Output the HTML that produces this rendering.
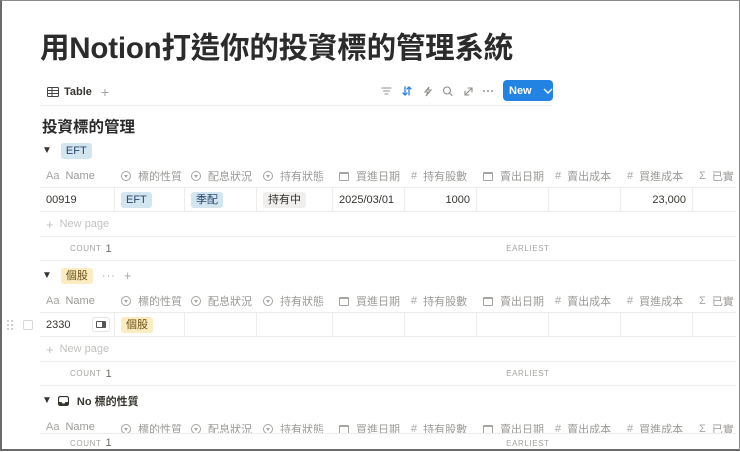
<!DOCTYPE html>
<html><head><meta charset="utf-8"><style>
*{margin:0;padding:0;box-sizing:border-box}
body{width:740px;height:451px;overflow:hidden;background:#fff;font-family:"Liberation Sans","Noto Sans CJK TC",sans-serif;color:#37352f;position:relative}
.frame{position:absolute;left:0;top:0;width:740px;height:451px;border:1px solid #8a8a8a;border-bottom:2px solid #6a6a6a;border-left:2px solid #6a6a6a;pointer-events:none;z-index:10}
.abs{position:absolute}
.title{left:40px;top:25px;font-size:29.5px;font-weight:700;color:#2b2b2b;letter-spacing:-0.2px;white-space:nowrap}
.g{position:absolute;left:0;width:740px;height:122px}
.lbl{position:absolute;left:42px;top:2px;height:17px;display:flex;align-items:center;font-size:11px}
.pill{padding:1px 5px;border-radius:3px;font-size:11px;line-height:14px}
.hdr,.row,.np,.cnt{position:absolute;left:40px;width:696px;display:flex;font-size:11px}
.hdr{top:25px;height:23px;color:#9b9a97;border-bottom:1px solid #ececeb}
.row{top:48px;height:24px;border-bottom:1px solid #ececeb}
.np{top:72px;height:25px;border-bottom:1px solid #ececeb;color:#c3c2bf;align-items:center;padding-left:6px}
.cnt{top:97px;height:24px;border-bottom:1px solid #ececeb;align-items:center;color:#a5a4a0;font-size:8px;letter-spacing:0.6px}
.c{flex:none;display:flex;align-items:center;padding:0 6px;white-space:nowrap;overflow:hidden}
.row .c{border-right:1px solid #ededec}
.w0{width:75px}.w1{width:70px}.w2{width:72px}.w3{width:76px}.w4{width:72px}.w5{width:72px}.w6{width:72px}.w7{width:72px}.w8{width:72px}.w9{width:43px}
.ic{display:inline-block;margin-right:6px;color:#a5a4a0}
.circ{width:10px;height:10px;border:1px solid #a5a4a0;border-radius:50%;position:relative;margin-right:7px;flex:none}
.circ:after{content:"";position:absolute;left:2px;top:3px;border-left:2px solid transparent;border-right:2px solid transparent;border-top:3px solid #a5a4a0}
.cal{width:10px;height:9px;border:1px solid #a5a4a0;border-top-width:2px;border-radius:1px;margin-right:7px;flex:none}
.blue{background:#d3e5ef;color:#28456c}
.yel{background:#fbecc1;color:#6b4f12}
.gray{background:#f0efed;color:#32302c}
.arr{font-size:10px;margin-right:9px}
.ear{margin-left:394px}
</style></head><body>
<div class="frame"></div>
<div class="abs title">用Notion打造你的投資標的管理系統</div>

<div class="abs" style="left:47px;top:84px;font-size:11px;font-weight:600;display:flex;align-items:center;color:#37352f">
<svg width="12" height="10" viewBox="0 0 12 10" style="margin-right:5px"><rect x="0.5" y="0.5" width="11" height="9" rx="1" fill="none" stroke="#444" stroke-width="1"/><line x1="0.5" y1="3.5" x2="11.5" y2="3.5" stroke="#444"/><line x1="0.5" y1="6.5" x2="11.5" y2="6.5" stroke="#444"/><line x1="5" y1="0.5" x2="5" y2="9.5" stroke="#444"/></svg>Table<span style="margin-left:9px;color:#a5a4a0;font-weight:400;font-size:14px">+</span></div>
<div class="abs" style="left:40px;top:105px;width:512px;height:1px;background:#ececeb"></div>
<svg class="abs" style="left:380px;top:84px" width="120" height="14" viewBox="0 0 120 14">
<g stroke="#8f8e8a" fill="none" stroke-width="1.1" stroke-linecap="round">
<line x1="2" y1="4" x2="11" y2="4"/><line x1="3.5" y1="7" x2="9.5" y2="7"/><line x1="5" y1="10" x2="8" y2="10"/>
<path d="M49 3 L45 8 L48 8 L46 12 L51 6 L48 6 Z"/>
<circle cx="67" cy="6.5" r="3.5"/><line x1="69.5" y1="9" x2="72" y2="11.5"/>
<path d="M85 11 L92 4 M88 4 L92 4 L92 8 M85 7 L85 11 L89 11"/>
</g>
<g stroke="#2383e2" stroke-width="1.3" fill="none" stroke-linecap="round"><path d="M25 3 L25 11 M23 9 L25 11 L27 9 M29 11 L29 3 M27 5 L29 3 L31 5"/></g>
<g fill="#8f8e8a"><circle cx="104" cy="7" r="1"/><circle cx="108" cy="7" r="1"/><circle cx="112" cy="7" r="1"/></g>
</svg>
<div class="abs" style="left:503px;top:80px;width:50px;height:21px;background:#2383e2;border-radius:4px;color:#fff;font-size:11px;font-weight:700;display:flex;align-items:center;padding-left:6px">New<svg width="10" height="6" style="margin-left:11px" viewBox="0 0 10 6"><path d="M1 1 L5 5 L9 1" stroke="#fff" stroke-width="1.4" fill="none"/></svg></div>

<div class="abs" style="left:42px;top:115px;font-size:15.5px;font-weight:700;color:#2b2b2b">投資標的管理</div>

<div class="g" style="top:140px">
<div class="lbl"><span class="arr">▼</span><span class="pill blue">EFT</span></div>
<div class="hdr">
<div class="c w0"><span class="ic">Aa</span>Name</div><div class="c w1"><span class="circ"></span>標的性質</div><div class="c w2"><span class="circ"></span>配息狀況</div><div class="c w3"><span class="circ"></span>持有狀態</div><div class="c w4"><span class="cal"></span>買進日期</div><div class="c w5"><span class="ic">#</span>持有股數</div><div class="c w6"><span class="cal"></span>賣出日期</div><div class="c w7"><span class="ic">#</span>賣出成本</div><div class="c w8"><span class="ic">#</span>買進成本</div><div class="c w9"><span class="ic">Σ</span>已實</div>
</div>
<div class="row">
<div class="c w0">00919</div><div class="c w1"><span class="pill blue">EFT</span></div><div class="c w2"><span class="pill blue">季配</span></div><div class="c w3"><span class="pill gray">持有中</span></div><div class="c w4">2025/03/01</div><div class="c w5" style="justify-content:flex-end">1000</div><div class="c w6"></div><div class="c w7"></div><div class="c w8" style="justify-content:flex-end">23,000</div><div class="c w9" style="border:none"></div>
</div>
<div class="np"><span style="font-size:13px;margin-right:6px">+</span>New page</div>
<div class="cnt"><span style="margin-left:30px">COUNT</span><span style="font-size:11px;color:#6f6e69;margin-left:4px">1</span><span class="ear">EARLIEST</span></div>
</div>

<div class="g" style="top:265px">
<div class="lbl"><span class="arr">▼</span><span class="pill yel">個股</span><span style="color:#a5a4a0;margin-left:9px;letter-spacing:1px">···</span><span style="color:#a5a4a0;margin-left:8px;font-size:13px">+</span></div>
<div class="hdr">
<div class="c w0"><span class="ic">Aa</span>Name</div><div class="c w1"><span class="circ"></span>標的性質</div><div class="c w2"><span class="circ"></span>配息狀況</div><div class="c w3"><span class="circ"></span>持有狀態</div><div class="c w4"><span class="cal"></span>買進日期</div><div class="c w5"><span class="ic">#</span>持有股數</div><div class="c w6"><span class="cal"></span>賣出日期</div><div class="c w7"><span class="ic">#</span>賣出成本</div><div class="c w8"><span class="ic">#</span>買進成本</div><div class="c w9"><span class="ic">Σ</span>已實</div>
</div>
<div class="row">
<div class="c w0" style="justify-content:space-between;padding-right:4px">2330<span style="display:inline-block;width:18px;height:15px;border:1px solid #e5e5e3;border-radius:3px;position:relative"><span style="position:absolute;left:3px;top:3px;width:10px;height:7px;border:1px solid #555;border-radius:1px;border-right-width:4px"></span></span></div><div class="c w1"><span class="pill yel">個股</span></div><div class="c w2"></div><div class="c w3"></div><div class="c w4"></div><div class="c w5"></div><div class="c w6"></div><div class="c w7"></div><div class="c w8"></div><div class="c w9" style="border:none"></div>
</div>
<svg class="abs" style="left:6px;top:54px" width="8" height="12" viewBox="0 0 8 12"><g fill="#c3c2bf"><circle cx="2" cy="2" r="1"/><circle cx="6" cy="2" r="1"/><circle cx="2" cy="6" r="1"/><circle cx="6" cy="6" r="1"/><circle cx="2" cy="10" r="1"/><circle cx="6" cy="10" r="1"/></g></svg>
<div class="abs" style="left:23px;top:55px;width:10px;height:10px;border:1px solid #d8d8d6;border-radius:2px"></div>
<div class="np"><span style="font-size:13px;margin-right:6px">+</span>New page</div>
<div class="cnt"><span style="margin-left:30px">COUNT</span><span style="font-size:11px;color:#6f6e69;margin-left:4px">1</span><span class="ear">EARLIEST</span></div>
</div>

<div class="g" style="top:390px;height:60px">
<div class="lbl" style="font-weight:600;font-size:11px"><span class="arr" style="margin-right:6px;font-weight:400">▼</span><svg width="11" height="10" viewBox="0 0 11 10" style="margin-right:8px"><rect x="0.5" y="0.5" width="10" height="9" rx="2" fill="none" stroke="#37352f" stroke-width="1.2"/><path d="M0.5 6 L3.5 6 L4.5 7.5 L6.5 7.5 L7.5 6 L10.5 6 L10.5 9.5 L0.5 9.5 Z" fill="#37352f"/></svg>No 標的性質</div>
<div class="hdr" style="overflow:hidden;border:none;top:28px;height:15px;align-items:flex-start">
<div class="c w0" style="padding-top:3px"><span class="ic">Aa</span>Name</div><div class="c w1" style="padding-top:3px"><span class="circ"></span>標的性質</div><div class="c w2" style="padding-top:3px"><span class="circ"></span>配息狀況</div><div class="c w3" style="padding-top:3px"><span class="circ"></span>持有狀態</div><div class="c w4" style="padding-top:3px"><span class="cal"></span>買進日期</div><div class="c w5" style="padding-top:3px"><span class="ic">#</span>持有股數</div><div class="c w6" style="padding-top:3px"><span class="cal"></span>賣出日期</div><div class="c w7" style="padding-top:3px"><span class="ic">#</span>賣出成本</div><div class="c w8" style="padding-top:3px"><span class="ic">#</span>買進成本</div><div class="c w9" style="padding-top:3px"><span class="ic">Σ</span>已實</div>
</div>
<div class="abs" style="left:40px;top:43px;width:696px;height:1px;background:#ececeb"></div>
<div class="cnt" style="top:44px;height:18px;border:none"><span style="margin-left:30px">COUNT</span><span style="font-size:11px;color:#6f6e69;margin-left:4px">1</span><span class="ear">EARLIEST</span></div>
</div>
</body></html>
